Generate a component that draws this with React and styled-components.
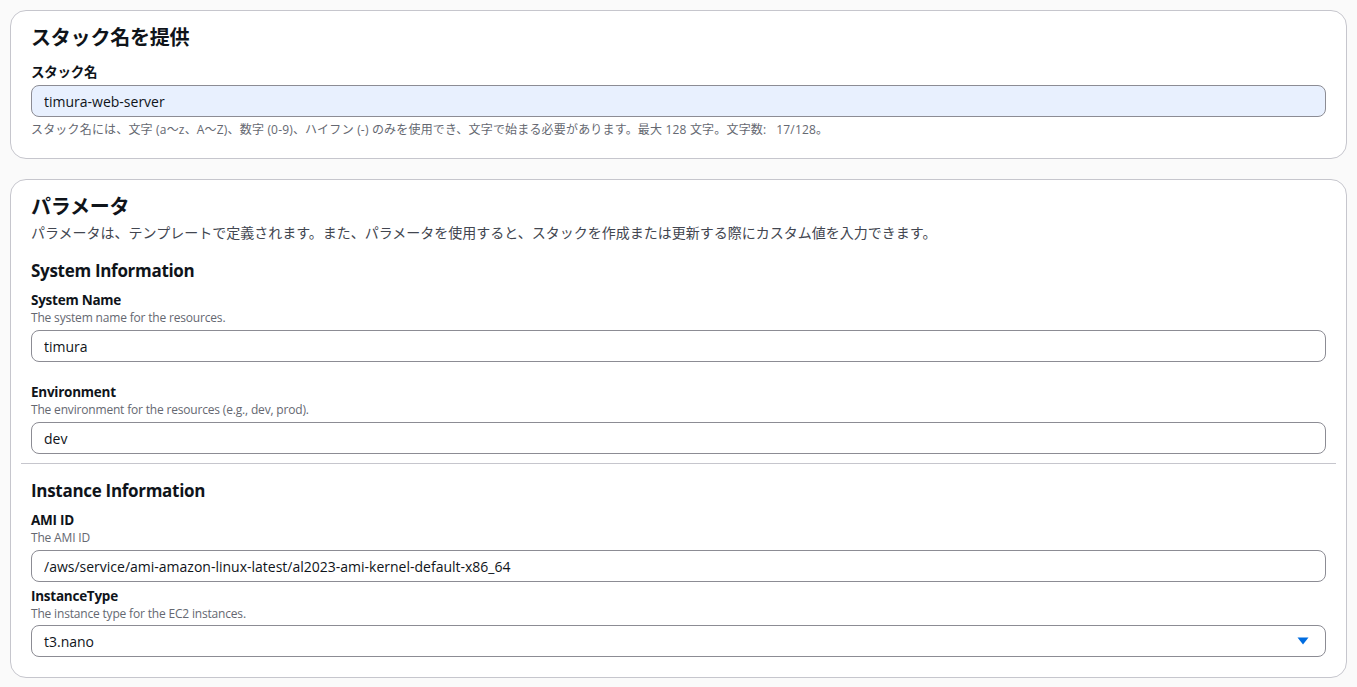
import React from 'react'
import styled, { createGlobalStyle } from 'styled-components'

const GlobalStyle = createGlobalStyle`
    html, body {
        margin: 0;
        padding: 0;
        background: #fafafa;
    }
    body {
        font-family: 'Open Sans', 'Noto Sans CJK JP', sans-serif;
        color: #0f141a;
    }
`

function Field({ label, description, value, select, space }) {
    return (
        <FieldWrap space={space}>
            <Label>{label}</Label>
            {description && <Description>{description}</Description>}
            {select ? (
                <SelectBox>
                    <span>{value}</span>
                    <svg width="12" height="8" viewBox="0 0 12 8">
                        <path d="M0.5 0.5 L11.5 0.5 L6 7.5 Z" fill="#006ce0" />
                    </svg>
                </SelectBox>
            ) : (
                <Input defaultValue={value} />
            )}
        </FieldWrap>
    )
}

export default function App() {
    return (
        <Page>
            <GlobalStyle />
            <Card>
                <Title>スタック名を提供</Title>
                <StackField>
                    <Label>スタック名</Label>
                    <Input autofill defaultValue="timura-web-server" />
                    <Hint>スタック名には、文字 (a〜z、A〜Z)、数字 (0-9)、ハイフン (-) のみを使用でき、文字で始まる必要があります。最大 128 文字。文字数:&nbsp;&nbsp; 17/128。</Hint>
                </StackField>
            </Card>
            <Card>
                <Title>パラメータ</Title>
                <Intro>パラメータは、テンプレートで定義されます。また、パラメータを使用すると、スタックを作成または更新する際にカスタム値を入力できます。</Intro>
                <Section>
                    <SectionTitle space={16}>System Information</SectionTitle>
                    <Field space={7} label="System Name" description="The system name for the resources." value="timura" />
                    <Field space={20} label="Environment" description="The environment for the resources (e.g., dev, prod)." value="dev" />
                </Section>
                <Divider />
                <Section>
                    <SectionTitle space={15}>Instance Information</SectionTitle>
                    <Field space={7} label="AMI ID" description="The AMI ID" value="/aws/service/ami-amazon-linux-latest/al2023-ami-kernel-default-x86_64" />
                    <Field space={4} label="InstanceType" description="The instance type for the EC2 instances." value="t3.nano" select />
                </Section>
            </Card>
        </Page>
    )
}

const Page = styled.div`
    padding: 10px;
    display: flex;
    flex-direction: column;
    gap: 20px;
`

const Card = styled.div`
    background: #ffffff;
    border: 1px solid #c6c6cd;
    border-radius: 16px;
    padding: 13px 20px 20px;
`

const Title = styled.h2`
    margin: 0;
    font-size: 20px;
    line-height: 28px;
    font-weight: 700;
    letter-spacing: -0.2px;
`

const StackField = styled.div`
    margin-top: 10px;
    display: flex;
    flex-direction: column;
`

const Label = styled.div`
    font-size: 13.5px;
    line-height: 20px;
    font-weight: 700;
    letter-spacing: -0.25px;
`

const Description = styled.div`
    font-size: 12px;
    line-height: 16px;
    color: #656871;
    letter-spacing: -0.18px;
`

const Hint = styled.div`
    margin-top: 5px;
    font-size: 12px;
    line-height: 16px;
    color: #656871;
    letter-spacing: 0.18px;
`

const Intro = styled.p`
    margin: 2px 0 0;
    font-size: 14px;
    line-height: 20px;
    color: #424650;
`

const Section = styled.div`
    display: flex;
    flex-direction: column;
`

const SectionTitle = styled.h3`
    margin: ${props => props.space}px 0 0;
    font-size: 17px;
    line-height: 24px;
    font-weight: 700;
    letter-spacing: -0.3px;
`

const FieldWrap = styled.div`
    display: flex;
    flex-direction: column;
    margin-top: ${props => props.space}px;
`

const Input = styled.input`
    box-sizing: border-box;
    width: 100%;
    height: 32px;
    margin-top: ${props => props.autofill ? '3px' : '4px'};
    padding: 0 12px;
    border: 1px solid #8c8c94;
    border-radius: 8px;
    background: ${props => props.autofill ? '#e8f0fe' : '#ffffff'};
    font-family: 'Open Sans', 'Noto Sans CJK JP', sans-serif;
    font-size: 14px;
    color: #0f141a;
    outline: none;
`

const SelectBox = styled.div`
    box-sizing: border-box;
    height: 32px;
    margin-top: 3px;
    padding: 0 16px 0 12px;
    border: 1px solid #8c8c94;
    border-radius: 8px;
    display: flex;
    align-items: center;
    justify-content: space-between;
    font-size: 14px;
    svg {
        display: block;
    }
`

const Divider = styled.div`
    margin: 9px -10px 0;
    height: 1px;
    background: #c6c6cd;
`
